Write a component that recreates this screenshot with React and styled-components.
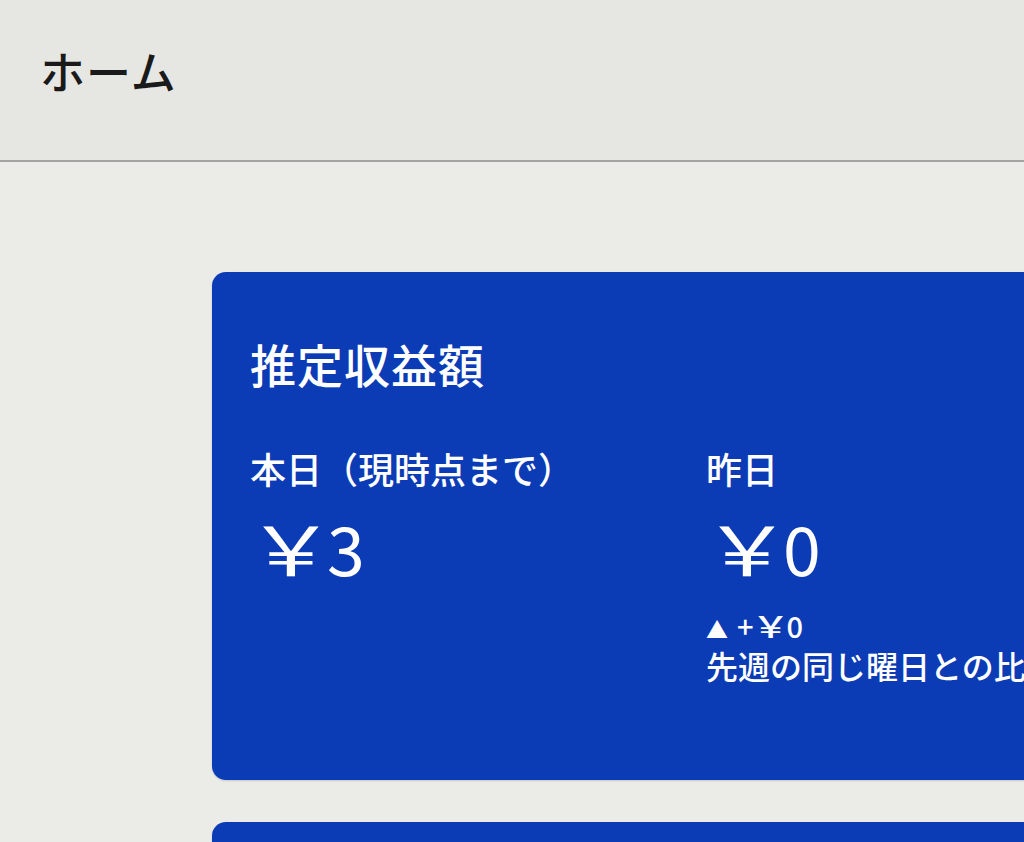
import React from "react";
import styled, { createGlobalStyle } from "styled-components";

const GlobalStyle = createGlobalStyle`
  html, body {
    margin: 0;
    padding: 0;
    background: #e9e9e6;
    overflow: hidden;
  }
  body {
    font-family: "Noto Sans CJK JP", "Noto Sans", sans-serif;
  }
`;

const summary = [
  { label: "本日（現時点まで）", amount: "3" },
  {
    label: "昨日",
    amount: "0",
    delta: "0",
    note: "先週の同じ曜日との比較",
  },
];

const App = () => {
  return (
    <Page>
      <GlobalStyle />
      <Header>
        <Title>ホーム</Title>
      </Header>
      <Content>
        <Card>
          <CardTitle>推定収益額</CardTitle>
          <Columns>
            {summary.map((item) => (
              <Column key={item.label}>
                <Label>{item.label}</Label>
                <Amount>
                  <Yen>￥</Yen>
                  {item.amount}
                </Amount>
                {item.delta && (
                  <Delta>
                    <Arrow>▲</Arrow>
                    <span>+</span>
                    <Yen $small>￥</Yen>
                    <span>{item.delta}</span>
                  </Delta>
                )}
                {item.note && <Note>{item.note}</Note>}
              </Column>
            ))}
          </Columns>
        </Card>
        <Card $short />
      </Content>
    </Page>
  );
};

const Page = styled.div`
  width: 1024px;
  height: 842px;
  overflow: hidden;
  background: #ebebe8;
`;

const Header = styled.header`
  height: 162px;
  display: flex;
  align-items: center;
  padding: 0 0 20px 40px;
  box-sizing: border-box;
  background: #e6e6e3;
  border-bottom: 2px solid #a3a3a1;
`;

const Title = styled.h1`
  margin: 0;
  font-size: 45px;
  font-weight: 500;
  color: #1a1a1a;
  letter-spacing: 1px;
`;

const Content = styled.main`
  display: flex;
  flex-direction: column;
  gap: 42px;
  padding: 110px 0 0 212px;
`;

const Card = styled.section`
  width: 1000px;
  flex-shrink: 0;
  height: ${(p) => (p.$short ? "200px" : "508px")};
  box-sizing: border-box;
  padding: 64px 0 0 38px;
  background: #0b3bb5;
  border-radius: 14px;
  color: #ffffff;
  box-shadow: 0 1px 2px rgba(0, 0, 0, 0.15);
`;

const CardTitle = styled.h2`
  margin: 0;
  font-size: 46px;
  font-weight: 500;
  line-height: 1.2;
  letter-spacing: 1px;
`;

const Columns = styled.div`
  display: flex;
  margin-top: 56px;
`;

const Column = styled.div`
  width: 456px;
  display: flex;
  flex-direction: column;
`;

const Label = styled.div`
  font-size: 36px;
  font-weight: 500;
  line-height: 1.2;
  white-space: nowrap;
`;

const Amount = styled.div`
  font-size: 68px;
  font-weight: 400;
  line-height: 1.2;
  margin-top: 16px;
  display: flex;
  align-items: baseline;
`;

/* the yen sign in the screenshot is drawn wider than the CJK glyph */
const Yen = styled.span`
  display: inline-block;
  transform: scaleX(1.3);
  transform-origin: center;
  margin: ${(p) => (p.$small ? "0 2px" : "0 2px 0 7px")};
`;

const Delta = styled.div`
  font-size: 29px;
  font-weight: 500;
  line-height: 1.1;
  margin-top: 22px;
  display: flex;
  align-items: baseline;
`;

const Arrow = styled.span`
  font-size: 22px;
  margin-right: 9px;
`;

const Note = styled.div`
  font-size: 32px;
  font-weight: 500;
  line-height: 1.2;
  margin-top: 4px;
  white-space: nowrap;
`;

export default App;
